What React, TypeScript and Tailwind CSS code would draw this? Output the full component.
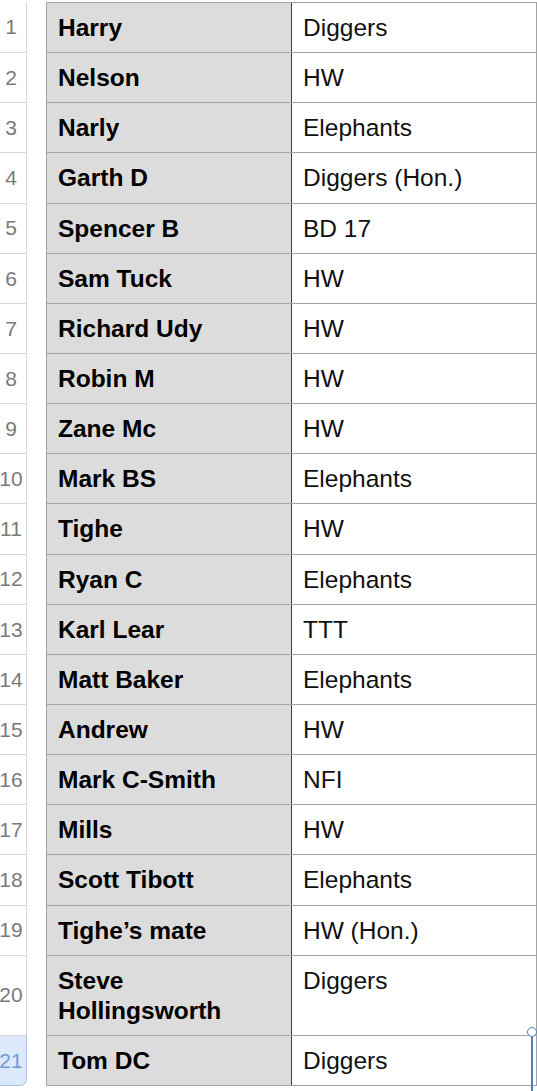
import React from "react";

type Row = { name: string; team: string; tall?: boolean };

const rows: Row[] = [
  { name: "Harry", team: "Diggers" },
  { name: "Nelson", team: "HW" },
  { name: "Narly", team: "Elephants" },
  { name: "Garth D", team: "Diggers (Hon.)" },
  { name: "Spencer B", team: "BD 17" },
  { name: "Sam Tuck", team: "HW" },
  { name: "Richard Udy", team: "HW" },
  { name: "Robin M", team: "HW" },
  { name: "Zane Mc", team: "HW" },
  { name: "Mark BS", team: "Elephants" },
  { name: "Tighe", team: "HW" },
  { name: "Ryan C", team: "Elephants" },
  { name: "Karl Lear", team: "TTT" },
  { name: "Matt Baker", team: "Elephants" },
  { name: "Andrew", team: "HW" },
  { name: "Mark C-Smith", team: "NFI" },
  { name: "Mills", team: "HW" },
  { name: "Scott Tibott", team: "Elephants" },
  { name: "Tighe’s mate", team: "HW (Hon.)" },
  { name: "Steve Hollingsworth", team: "Diggers", tall: true },
  { name: "Tom DC", team: "Diggers" },
];

function SheetRow({ row, index }: { row: Row; index: number }) {
  const first = index === 0;
  const selected = index === rows.length - 1;
  return (
    <div className="flex">
      <div
        className={
          selected
            ? "w-[27px] shrink-0 flex items-center justify-center pr-[4px] text-[21px] text-[#6f9bd0] bg-[#dce9fa] border-r border-b border-[#a9c3e4] rounded-br-[7px]"
            : "w-[27px] shrink-0 flex items-center justify-center pr-[4px] text-[21px] text-[#7a7a7a] border-r border-b border-[#d9d9d9]"
        }
      >
        {index + 1}
      </div>
      <div
        className={
          "ml-[19px] flex w-[491px] border-l border-r border-b border-[#a3a3a3]" +
          (first ? " border-t" : "")
        }
      >
        <div className="w-[244px] shrink-0 bg-[#dcdcdc] pl-[11px] pr-[8px] pt-[10px] pb-[9.15px] text-[24.5px] leading-[30px] font-bold text-black">
          {row.tall ? (
            <>
              Steve
              <br />
              Hollingsworth
            </>
          ) : (
            row.name
          )}
        </div>
        <div className="flex-1 border-l border-[#3a3a3a] pl-[11px] pt-[10px] pb-[9.15px] text-[24.5px] leading-[30px] text-[#111]">
          {row.team}
        </div>
      </div>
    </div>
  );
}

export default function App() {
  return (
    <div className="relative w-[537px] h-[1091px] overflow-hidden bg-white pt-[2px] font-['Liberation_Sans',Arial,sans-serif]">
      {rows.map((row, i) => (
        <SheetRow key={i} row={row} index={i} />
      ))}
      {/* selection handle */}
      <div className="absolute left-[531px] top-[1033px] w-[2px] h-[70px] bg-[#4f7fb4]" />
      <div className="absolute left-[527px] top-[1027px] w-[10px] h-[10px] rounded-full border-[1.5px] border-[#4f7fb4] bg-white" />
    </div>
  );
}
